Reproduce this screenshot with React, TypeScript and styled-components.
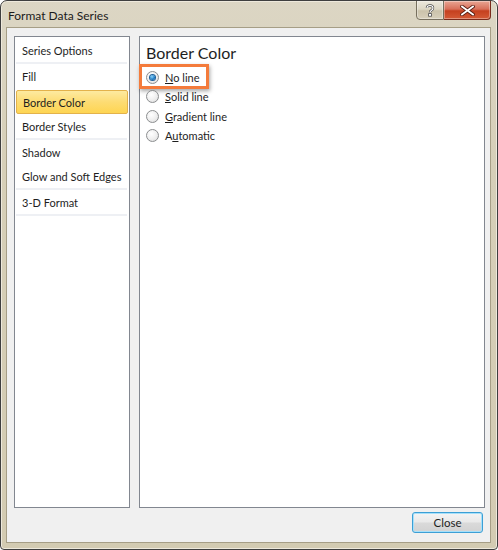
import React, { useState } from "react";
import styled, { createGlobalStyle } from "styled-components";

const GlobalStyle = createGlobalStyle`
  html, body {
    margin: 0;
    padding: 0;
    background: #ffffff;
  }
  body {
    font-family: Lato, "Noto Sans", sans-serif;
  }
`;

const Window = styled.div`
  box-sizing: border-box;
  width: 498px;
  height: 550px;
  display: flex;
  flex-direction: column;
  border: 1px solid #3f3f3f;
  border-radius: 7px 7px 4px 4px;
  background: linear-gradient(180deg, #dcd6c4 0%, #d6cfb8 30%, #d3cbb2 100%);
  box-shadow: inset 0 0 0 1px #eee9dc;
  overflow: hidden;
`;

const TitleBar = styled.div`
  height: 26px;
  display: flex;
  align-items: flex-start;
  flex-shrink: 0;
`;

const Title = styled.div`
  padding: 7px 0 0 7px;
  font-size: 12px;
  color: #1b1b1b;
`;

const Captions = styled.div`
  margin-left: auto;
  margin-right: 6px;
  margin-top: -1px;
  display: flex;
`;

const CaptionButton = styled.div<{ $close?: boolean }>`
  box-sizing: border-box;
  width: ${(p) => (p.$close ? "47px" : "28px")};
  height: 20px;
  display: flex;
  align-items: center;
  justify-content: center;
  border: 1px solid ${(p) => (p.$close ? "#7a2b1c" : "#77705e")};
  border-left-width: ${(p) => (p.$close ? "0" : "1px")};
  border-radius: ${(p) => (p.$close ? "0 0 4px 0" : "0 0 0 4px")};
  background: ${(p) =>
    p.$close
      ? "linear-gradient(180deg, #e9a593 0%, #d8705a 45%, #c5401f 55%, #d45a36 100%)"
      : "linear-gradient(180deg, #ece8dc 0%, #ddd7c5 45%, #cbc3ab 55%, #d7d0bb 100%)"};
  box-shadow: inset 0 0 0 1px rgba(255, 255, 255, 0.35);
`;

const Client = styled.div`
  flex: 1;
  margin: 0 6px 6px 5px;
  border: 1px solid #a69e86;
  background: #f0f0f0;
  display: flex;
  flex-direction: column;
  padding: 8px 5px 9px 7px;
  min-height: 0;
`;

const Body = styled.div`
  flex: 1;
  display: flex;
  gap: 9px;
  min-height: 0;
`;

const Panel = styled.div<{ $width: number }>`
  box-sizing: border-box;
  width: ${(p) => p.$width}px;
  border: 1px solid #828790;
  background: #ffffff;
`;

const NavList = styled.div`
  display: flex;
  flex-direction: column;
  padding-top: 1px;
`;

const NavItem = styled.div<{ $selected?: boolean }>`
  box-sizing: border-box;
  height: 24px;
  display: flex;
  align-items: center;
  white-space: nowrap;
  padding-left: ${(p) => (p.$selected ? "6px" : "7px")};
  margin: ${(p) => (p.$selected ? "2px 0 0 1px" : "0")};
  font-size: 11px;
  color: #1e1e1e;
  border: ${(p) => (p.$selected ? "1px solid #e3b24b" : "none")};
  border-radius: 2px;
  background: ${(p) =>
    p.$selected ? "linear-gradient(180deg, #fdeaa0 0%, #fddc73 50%, #fed552 100%)" : "transparent"};
  width: ${(p) => (p.$selected ? "112px" : "auto")};
`;

const Separator = styled.div`
  height: 2px;
  margin: 0 2px 0 1px;
  background: #eef0f4;
`;

const Content = styled.div`
  padding: 6px 6px;
`;

const Heading = styled.div`
  font-size: 16px;
  color: #1e1e1e;
  margin-bottom: 6px;
`;

const RadioRow = styled.label`
  position: relative;
  display: flex;
  align-items: center;
  gap: 6px;
  height: 19.3px;
  font-size: 11px;
  color: #1e1e1e;
  cursor: default;
`;

const Highlight = styled.span`
  position: absolute;
  left: -7px;
  top: -4px;
  width: 70px;
  height: 25px;
  box-sizing: border-box;
  border: 3px solid #f47b3b;
  box-shadow: 1px 2px 4px rgba(0, 0, 0, 0.35);
  pointer-events: none;
`;

const RadioCircle = styled.span<{ $checked?: boolean }>`
  box-sizing: border-box;
  width: 13px;
  height: 13px;
  border-radius: 50%;
  border: 1px solid #8c8e90;
  background: radial-gradient(circle at 40% 35%, #ffffff 0%, #eeeeee 55%, #d6d6d6 100%);
  display: flex;
  align-items: center;
  justify-content: center;

  &::after {
    content: "";
    display: ${(p) => (p.$checked ? "block" : "none")};
    width: 5px;
    height: 5px;
    border-radius: 50%;
    background: radial-gradient(circle at 40% 35%, #8fd6fb 0%, #1a78c2 60%, #0b4e8a 100%);
    box-shadow: 0 0 0 1px #1d5f99;
  }
`;

const Key = styled.span`
  text-decoration: underline;
`;

const Footer = styled.div`
  display: flex;
  justify-content: flex-end;
  padding: 4px 2px 0 0;
`;

const Button = styled.button`
  box-sizing: border-box;
  width: 71px;
  height: 21px;
  font-family: inherit;
  font-size: 11.5px;
  color: #1e1e1e;
  border: 1px solid #3c9fd5;
  border-radius: 3px;
  background: linear-gradient(180deg, #f4f4f4 0%, #e9e9e9 48%, #dadada 52%, #d2d2d2 100%);
  box-shadow: inset 0 0 0 1px #a6e0fa;
  padding: 0;
`;

const navGroups: string[][] = [
  ["Series Options"],
  ["Fill", "Border Color", "Border Styles"],
  ["Shadow", "Glow and Soft Edges"],
  ["3-D Format"],
];

const options = [
  { key: "N", rest: "o line" },
  { key: "S", rest: "olid line" },
  { key: "G", rest: "radient line" },
  { key: "u", rest: "tomatic", prefix: "A" },
];

const HelpIcon = () => (
  <svg width="10" height="13" viewBox="0 0 10 13">
    <path
      d="M2 4 Q2 1.5 5 1.5 Q8 1.5 8 4 Q8 5.5 6.3 6.4 Q5 7 5 8.5"
      fill="none"
      stroke="#4a4a4a"
      strokeWidth="2.4"
    />
    <path d="M2 4 Q2 1.5 5 1.5 Q8 1.5 8 4 Q8 5.5 6.3 6.4 Q5 7 5 8.5" fill="none" stroke="#fff" strokeWidth="1.1" />
    <rect x="3.6" y="9.6" width="2.8" height="2.6" fill="#fff" stroke="#4a4a4a" strokeWidth="0.8" />
  </svg>
);

const CloseIcon = () => (
  <svg width="15" height="11" viewBox="0 0 15 11">
    <path d="M2 1.5 L13 9.5 M13 1.5 L2 9.5" stroke="#5a1f14" strokeWidth="3.6" strokeLinecap="square" />
    <path d="M2 1.5 L13 9.5 M13 1.5 L2 9.5" stroke="#ffffff" strokeWidth="1.8" strokeLinecap="square" />
  </svg>
);

const App: React.FC = () => {
  const [selected, setSelected] = useState<string>("Border Color");
  const [choice, setChoice] = useState<number>(0);

  return (
    <>
      <GlobalStyle />
      <Window>
        <TitleBar>
          <Title>Format Data Series</Title>
          <Captions>
            <CaptionButton>
              <HelpIcon />
            </CaptionButton>
            <CaptionButton $close>
              <CloseIcon />
            </CaptionButton>
          </Captions>
        </TitleBar>
        <Client>
          <Body>
            <Panel $width={116}>
              <NavList>
                {navGroups.map((group, gi) => (
                  <React.Fragment key={gi}>
                    {group.map((name) => (
                      <NavItem
                        key={name}
                        $selected={name === selected}
                        onClick={() => setSelected(name)}
                      >
                        {name}
                      </NavItem>
                    ))}
                    <Separator />
                  </React.Fragment>
                ))}
              </NavList>
            </Panel>
            <Panel $width={346}>
              <Content>
                <Heading>{selected}</Heading>
                {options.map((o, i) => (
                  <RadioRow key={i} onClick={() => setChoice(i)}>
                    {i === 0 && <Highlight />}
                    <RadioCircle $checked={choice === i} />
                    <span>
                      {o.prefix}
                      <Key>{o.key}</Key>
                      {o.rest}
                    </span>
                  </RadioRow>
                ))}
              </Content>
            </Panel>
          </Body>
          <Footer>
            <Button>Close</Button>
          </Footer>
        </Client>
      </Window>
    </>
  );
};

export default App;
